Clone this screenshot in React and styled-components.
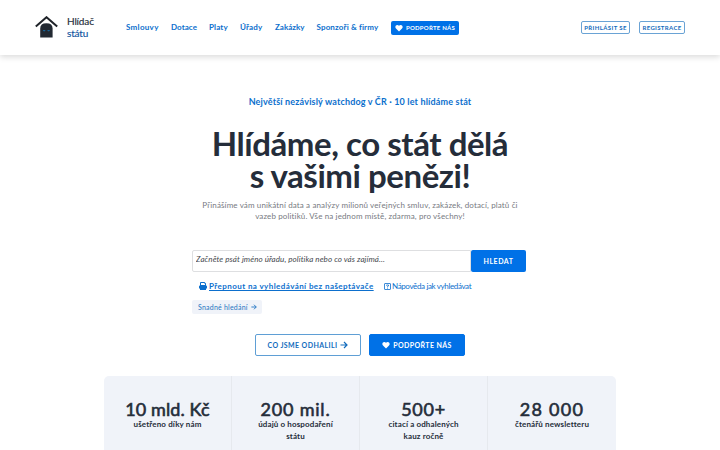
import React from "react";
import styled, { createGlobalStyle } from "styled-components";

const GlobalStyle = createGlobalStyle`
  * {
    box-sizing: border-box;
  }
  body {
    margin: 0;
    height: 450px;
    overflow: hidden;
    background: #fff;
    color: #252d3a;
    font-family: Lato, "Open Sans", sans-serif;
  }
  a {
    color: inherit;
    text-decoration: none;
  }
`;

const Header = styled.header`
  display: flex;
  align-items: center;
  height: 55px;
  padding: 0 35px;
  box-shadow: 0 2px 6px rgba(0, 0, 0, 0.15);
`;

const Logo = styled.a`
  display: flex;
  align-items: center;
  width: 91px;
  padding-bottom: 1px;
  svg {
    width: 23px;
    height: 22px;
    margin-right: 9px;
  }
`;

const LogoText = styled.span`
  color: #252d3a;
  font-size: 10px;
  line-height: 12px;
  letter-spacing: -0.15px;
  -webkit-text-stroke: 0.15px currentColor;
  em {
    display: block;
    color: #0f559f;
    font-style: normal;
  }
`;

const Nav = styled.nav`
  display: flex;
  align-items: center;
  gap: 12px;
  flex: 1;
`;

const NavLink = styled.a`
  width: ${(props) => props.$width}px;
  padding-bottom: 1px;
  color: #0c6fcd;
  font-size: 8px;
  font-weight: 700;
  line-height: 12px;
  letter-spacing: ${(props) => props.$spacing || 0}px;
  white-space: nowrap;
`;

const NavDonate = styled.a`
  display: flex;
  align-items: center;
  justify-content: center;
  gap: 3px;
  width: 68px;
  height: 14px;
  padding-bottom: 1px;
  border-radius: 2px;
  background: #0071e7;
  color: #fff;
  font-size: 6px;
  font-weight: 700;
  letter-spacing: 0.25px;
  white-space: nowrap;
  svg {
    width: 8px;
    height: 8px;
    margin-top: 1px;
  }
`;

const Account = styled.div`
  display: flex;
  gap: 9px;
`;

const AccountLink = styled.a`
  width: ${(props) => props.$width}px;
  height: 13px;
  border: 1px solid #6aa3d5;
  border-radius: 2px;
  color: #126cbd;
  font-size: 6px;
  font-weight: 700;
  line-height: 11px;
  letter-spacing: ${(props) => props.$spacing}px;
  text-align: center;
  white-space: nowrap;
`;

const Hero = styled.section`
  display: flex;
  flex-direction: column;
  align-items: center;
  padding-top: 41px;
  text-align: center;
`;

const Kicker = styled.p`
  margin: 0;
  color: #0c6fcd;
  font-size: 9px;
  font-weight: 700;
  line-height: 12px;
  letter-spacing: 0.16px;
`;

const Title = styled.h1`
  margin: 19px 0 0;
  font-size: 33px;
  font-weight: 700;
  line-height: 32px;
  letter-spacing: -0.45px;
  span {
    display: block;
  }
`;

const Lead = styled.p`
  margin: 9px 0 0;
  color: #777a7f;
  font-size: 8px;
  line-height: 11px;
  letter-spacing: 0.13px;
  span {
    display: block;
  }
`;

const SearchArea = styled.div`
  width: 334px;
  margin: 28px 2px 0 0;
  text-align: left;
`;

const SearchRow = styled.form`
  display: flex;
  height: 22px;
`;

const SearchInput = styled.input`
  flex: 1;
  min-width: 0;
  margin: 0;
  padding: 0 3px 4px;
  border: 1px solid #dedfe1;
  border-radius: 2px 0 0 2px;
  outline: 0;
  font: italic 8px Lato, "Open Sans", sans-serif;
  letter-spacing: 0.09px;
  &::placeholder {
    color: #45484d;
    opacity: 1;
  }
`;

const SearchButton = styled.button`
  width: 55px;
  padding: 0 0 1px;
  border: 0;
  border-radius: 2px;
  background: #0071e7;
  color: #fff;
  font: 700 7px Lato, "Open Sans", sans-serif;
  letter-spacing: 0.5px;
`;

const SearchLinks = styled.div`
  display: flex;
  align-items: center;
  height: 12px;
  margin-top: 8px;
  padding-left: 7px;
  color: #0c6fcd;
  font-size: 8px;
  line-height: 12px;
  white-space: nowrap;
`;

const SwitchLink = styled.a`
  display: flex;
  align-items: center;
  gap: 2px;
  width: 185px;
  font-weight: 700;
  letter-spacing: 0.42px;
  svg {
    width: 8px;
    height: 8px;
  }
  span {
    text-decoration: underline;
  }
`;

const HelpLink = styled.a`
  display: flex;
  align-items: center;
  gap: 1px;
  letter-spacing: -0.36px;
  svg {
    width: 7px;
    height: 7px;
  }
`;

const EasySearch = styled.a`
  display: flex;
  align-items: center;
  gap: 3px;
  width: 70px;
  height: 14px;
  margin-top: 8px;
  padding-left: 6px;
  border-radius: 2px;
  background: #f0f3f9;
  color: #1f75c2;
  font-size: 7px;
  letter-spacing: 0.22px;
  white-space: nowrap;
  svg {
    width: 6px;
    height: 6px;
  }
`;

const Actions = styled.div`
  display: flex;
  gap: 8px;
  margin-top: 20px;
`;

const ActionButton = styled.a`
  display: flex;
  align-items: center;
  justify-content: center;
  gap: 3px;
  width: ${(props) => (props.$primary ? 96 : 106)}px;
  height: 22px;
  border: 1px solid ${(props) => (props.$primary ? "#0071e7" : "#5f9fd5")};
  border-radius: 2px;
  background: ${(props) => (props.$primary ? "#0071e7" : "#fff")};
  color: ${(props) => (props.$primary ? "#fff" : "#126cbd")};
  font-size: 7px;
  font-weight: 700;
  letter-spacing: 0.4px;
  white-space: nowrap;
  svg {
    width: 8px;
    height: 8px;
  }
`;

const Stats = styled.section`
  display: grid;
  grid-template-columns: repeat(4, 1fr);
  width: 512px;
  height: 74px;
  margin: 20px auto 0;
  overflow: hidden;
  border-radius: 5px 5px 0 0;
  background: #f0f3f9;
`;

const Stat = styled.div`
  padding-top: 23px;
  border-right: 1px solid #e6e9ee;
  text-align: center;
  &:last-child {
    border-right: 0;
  }
`;

const StatValue = styled.div`
  font-size: 18px;
  font-weight: 400;
  line-height: 20px;
  letter-spacing: ${(props) => props.$spacing}px;
  -webkit-text-stroke: 0.6px currentColor;
`;

const StatLabel = styled.div`
  font-size: 8px;
  font-weight: 700;
  line-height: 11.5px;
  letter-spacing: 0.13px;
  span {
    display: block;
  }
`;

const HouseLogo = () => (
  <svg viewBox="0 0 23 22">
    <path d="M.8 10.4 11.5 1.2 22.2 10.4" fill="none" stroke="#20242a" strokeWidth="2" />
    <path d="M5.2 21.6v-9Q5.2 7.2 11.4 7.2t6.2 5.4v9Z" fill="#222932" />
    <path d="m7.8 14 2.8.3-.8 1H8.6ZM12.2 14.3l2.8-.3-.8 1.3H13Z" fill="#176ca7" />
  </svg>
);

const Heart = () => (
  <svg viewBox="0 0 16 16" fill="currentColor">
    <path d="M8 15 2 9C-2 4.5 4-1 8 3.5 12-1 18 4.5 14 9Z" />
  </svg>
);

const Arrow = () => (
  <svg viewBox="0 0 16 16" fill="none" stroke="currentColor" strokeWidth="2.4">
    <path d="M1 8h13M8 2l6 6-6 6" />
  </svg>
);

const Printer = () => (
  <svg viewBox="0 0 16 16" fill="currentColor">
    <path
      fillRule="evenodd"
      d="M4 0h7l3 3v4a2 2 0 0 1 2 2v4h-2v3H2v-3H0V9a2 2 0 0 1 2-2V2a2 2 0 0 1 2-2Zm0 2v4h8V4l-2-2Z"
    />
  </svg>
);

const Help = () => (
  <svg viewBox="0 0 14 14" fill="none" stroke="currentColor" strokeWidth="1.6">
    <rect x="1" y="1" width="12" height="12" rx="1" />
    <path d="M5 5V4h4v2L7 7v1.5M7 9.5v1.7" />
  </svg>
);

const navItems = [
  { label: "Smlouvy", width: 33, spacing: 0.3 },
  { label: "Dotace", width: 26, spacing: 0.06 },
  { label: "Platy", width: 19, spacing: 0.12 },
  { label: "Úřady", width: 23, spacing: 0.15 },
  { label: "Zakázky", width: 29.5 },
  { label: "Sponzoři & firmy", width: 62.5, spacing: 0.14 },
];

const stats = [
  { value: "10 mld. Kč", spacing: 0.1, lines: ["ušetřeno díky nám"] },
  { value: "200 mil.", spacing: 0.8, lines: ["údajů o hospodaření", "státu"] },
  { value: "500+", spacing: 0.7, lines: ["citací a odhalených", "kauz ročně"] },
  { value: "28 000", spacing: 1.3, lines: ["čtenářů newsletteru"] },
];

const App = () => {
  return (
    <>
      <GlobalStyle />
      <Header>
        <Logo href="#">
          <HouseLogo />
          <LogoText>
            Hlídač<em>státu</em>
          </LogoText>
        </Logo>
        <Nav>
          {navItems.map((item) => (
            <NavLink href="#" key={item.label} $width={item.width} $spacing={item.spacing}>
              {item.label}
            </NavLink>
          ))}
          <NavDonate href="#">
            <Heart />
            PODPOŘTE NÁS
          </NavDonate>
        </Nav>
        <Account>
          <AccountLink href="#" $width={49} $spacing={0.4}>
            PŘIHLÁSIT SE
          </AccountLink>
          <AccountLink href="#" $width={46} $spacing={0.35}>
            REGISTRACE
          </AccountLink>
        </Account>
      </Header>
      <Hero>
        <Kicker>Největší nezávislý watchdog v ČR · 10 let hlídáme stát</Kicker>
        <Title>
          <span>Hlídáme, co stát dělá</span>
          <span>s vašimi penězi!</span>
        </Title>
        <Lead>
          <span>Přinášíme vám unikátní data a analýzy milionů veřejných smluv, zakázek, dotací, platů či</span>
          <span>vazeb politiků. Vše na jednom místě, zdarma, pro všechny!</span>
        </Lead>
        <SearchArea>
          <SearchRow>
            <SearchInput placeholder="Začněte psát jméno úřadu, politika nebo co vás zajímá..." />
            <SearchButton type="button">HLEDAT</SearchButton>
          </SearchRow>
          <SearchLinks>
            <SwitchLink href="#">
              <Printer />
              <span>Přepnout na vyhledávání bez našeptávače</span>
            </SwitchLink>
            <HelpLink href="#">
              <Help />
              Nápověda jak vyhledávat
            </HelpLink>
          </SearchLinks>
          <EasySearch href="#">
            Snadné hledání
            <Arrow />
          </EasySearch>
        </SearchArea>
        <Actions>
          <ActionButton href="#">
            CO JSME ODHALILI
            <Arrow />
          </ActionButton>
          <ActionButton href="#" $primary>
            <Heart />
            PODPOŘTE NÁS
          </ActionButton>
        </Actions>
      </Hero>
      <Stats>
        {stats.map((stat) => (
          <Stat key={stat.value}>
            <StatValue $spacing={stat.spacing}>{stat.value}</StatValue>
            <StatLabel>
              {stat.lines.map((line) => (
                <span key={line}>{line}</span>
              ))}
            </StatLabel>
          </Stat>
        ))}
      </Stats>
    </>
  );
};

export default App;
